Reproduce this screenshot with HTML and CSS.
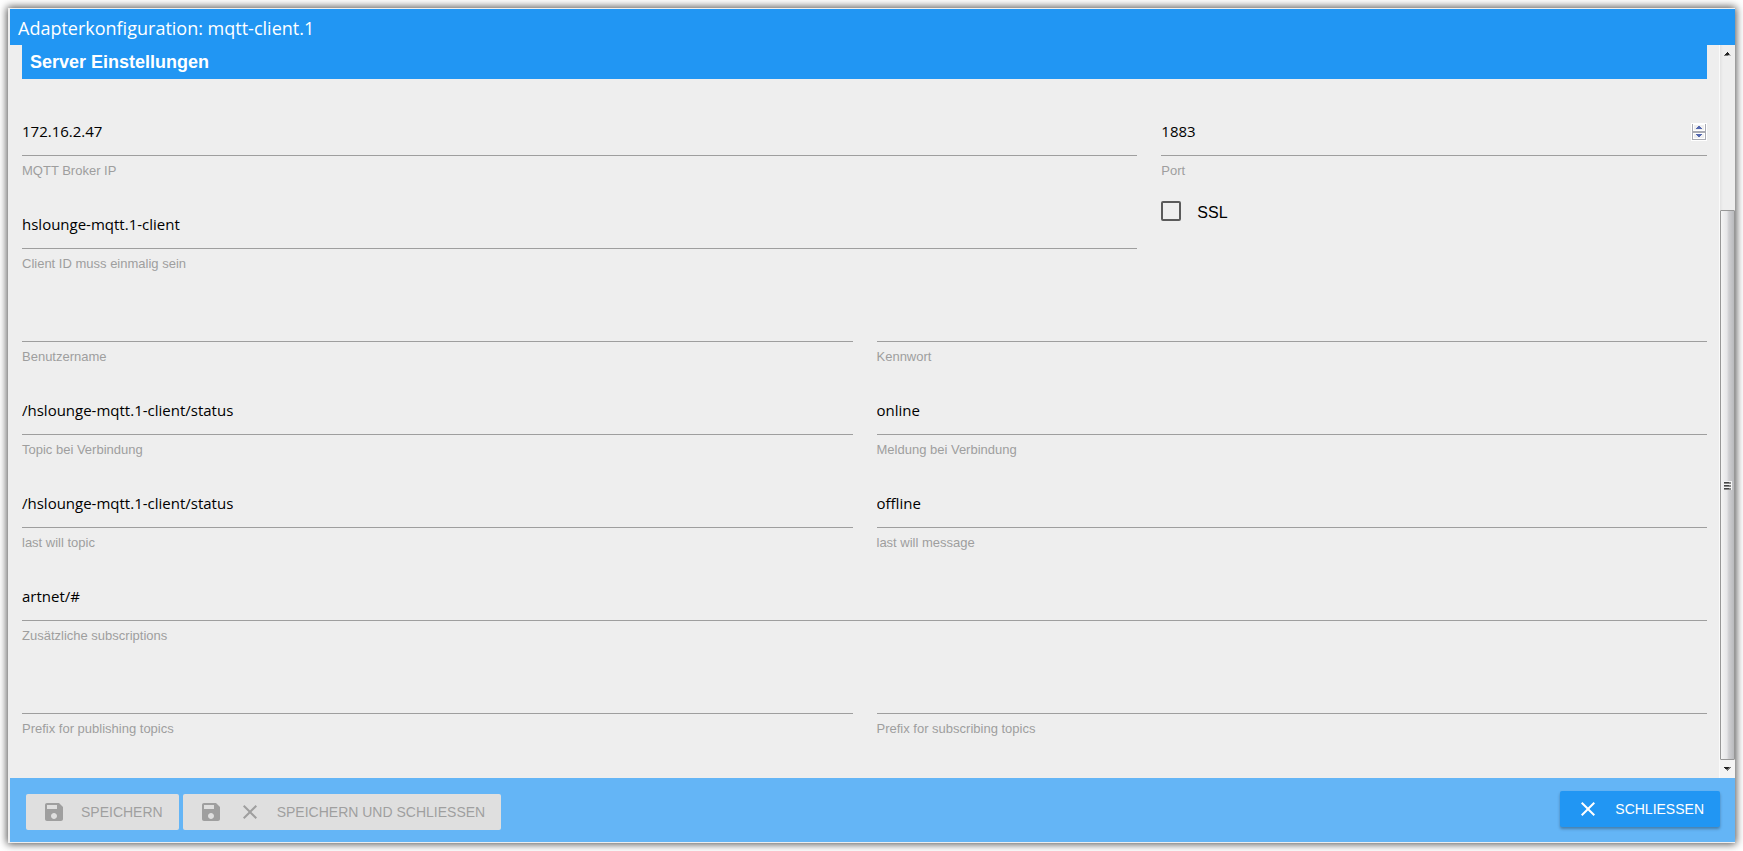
FILE: index.html
```html
<!DOCTYPE html>
<html lang="de">
<head>
<meta charset="utf-8">
<title>Adapterkonfiguration: mqtt-client.1</title>
<link rel="stylesheet" href="styles.css">
</head>
<body>
<svg class="sprite" aria-hidden="true">
  <symbol id="icon-save" viewBox="0 0 24 24"><path d="M17 3H5c-1.11 0-2 .9-2 2v14c0 1.1.89 2 2 2h14c1.1 0 2-.9 2-2V7l-4-4zm-5 16c-1.66 0-3-1.34-3-3s1.34-3 3-3 3 1.34 3 3-1.34 3-3 3zm3-10H5V5h10v4z"/></symbol>
  <symbol id="icon-close" viewBox="0 0 24 24"><path d="M19 6.41L17.59 5 12 10.59 6.41 5 5 6.41 10.59 12 5 17.59 6.41 19 12 13.41 17.59 19 19 17.59 13.41 12z"/></symbol>
</svg>
<div class="dialog" role="dialog" aria-labelledby="title">
  <header class="dialog-header"><h1 class="dialog-title" id="title">Adapterkonfiguration: mqtt-client.1</h1></header>
  <div class="dialog-body">
    <main class="content">
      <h2 class="section-title">Server Einstellungen</h2>
      <form class="fields">
        <div class="field span-8"><input class="field-input" id="url" type="text" value="172.16.2.47"><label class="field-label" for="url">MQTT Broker IP</label></div>
        <div class="field span-4">
          <div class="number-box">
            <input class="field-input" id="port" type="number" value="1883">
            <svg class="spinner" width="16" height="18" viewBox="0 0 16 18" shape-rendering="crispEdges" aria-hidden="true"><path fill="#fff" d="M0 0h16v18H0z"/><path fill="#a9abb3" d="M1 1h1v16H1zM14 1h1v16h-1zM1 8h14v2H1zM1 16h14v1H1z"/><path fill="#efefef" d="M3 2h10v5H3zM3 11h10v4H3z"/><path fill="#5468b0" d="M7 3h2v1H7zM6 4h4v1H6zM5 5h6v1H5zM5 11h6v1H5zM6 12h4v1H6zM7 13h2v1H7z"/></svg>
          </div>
          <label class="field-label" for="port">Port</label>
        </div>
        <div class="field span-8"><input class="field-input" id="client" type="text" value="hslounge-mqtt.1-client"><label class="field-label" for="client">Client ID muss einmalig sein</label></div>
        <div class="check-field span-4"><input class="checkbox" id="ssl" type="checkbox"><label for="ssl">SSL</label></div>
        <div class="field span-6"><input class="field-input" id="user" type="text"><label class="field-label" for="user">Benutzername</label></div>
        <div class="field span-6"><input class="field-input" id="pass" type="password"><label class="field-label" for="pass">Kennwort</label></div>
        <div class="field span-6"><input class="field-input" id="on-topic" type="text" value="/hslounge-mqtt.1-client/status"><label class="field-label" for="on-topic">Topic bei Verbindung</label></div>
        <div class="field span-6"><input class="field-input" id="on-message" type="text" value="online"><label class="field-label" for="on-message">Meldung bei Verbindung</label></div>
        <div class="field span-6"><input class="field-input" id="will-topic" type="text" value="/hslounge-mqtt.1-client/status"><label class="field-label" for="will-topic">last will topic</label></div>
        <div class="field span-6"><input class="field-input" id="will-message" type="text" value="offline"><label class="field-label" for="will-message">last will message</label></div>
        <div class="field span-12"><input class="field-input" id="subscriptions" type="text" value="artnet/#"><label class="field-label" for="subscriptions">Zusätzliche subscriptions</label></div>
        <div class="field span-6"><input class="field-input" id="out-prefix" type="text"><label class="field-label" for="out-prefix">Prefix for publishing topics</label></div>
        <div class="field span-6"><input class="field-input" id="in-prefix" type="text"><label class="field-label" for="in-prefix">Prefix for subscribing topics</label></div>
      </form>
    </main>
    <div class="scrollbar" aria-hidden="true">
      <div class="scroll-end"><svg width="7" height="4" viewBox="0 0 7 4" shape-rendering="crispEdges"><path fill="#222" d="M3 0h1v1H3zM2 1h3v1H2zM1 2h4v1H1z"/><path fill="#777" d="M5 2h1v1H5zM0 3h4v1H0z"/><path fill="#bbb" d="M4 3h3v1H4z"/></svg></div>
      <div></div>
      <div class="thumb"><svg width="8" height="9" viewBox="0 0 8 9" shape-rendering="crispEdges"><path fill="#f4f4f4" d="M0 0h8v9H0z"/><path fill="#444" d="M0 1h5v1H0zM0 4h5v1H0zM0 7h5v1H0z"/><path fill="#888" d="M5 1h2v1H5zM5 4h2v1H5zM5 7h2v1H5zM0 2h7v1H0zM0 5h7v1H0zM0 8h7v1H0z"/></svg></div>
      <div class="scroll-end scroll-down"><svg width="7" height="4" viewBox="0 0 7 4" shape-rendering="crispEdges"><path fill="#222" d="M0 0h5v1H0zM1 1h3v1H1z"/><path fill="#777" d="M5 0h2v1H5zM4 1h2v1H4zM2 2h3v1H2zM3 3h1v1H3z"/></svg></div>
    </div>
  </div>
  <footer class="dialog-footer">
    <button class="btn" type="button" disabled><svg class="icon"><use href="#icon-save"/></svg>SPEICHERN</button>
    <button class="btn" type="button" disabled><svg class="icon"><use href="#icon-save"/></svg><svg class="icon"><use href="#icon-close"/></svg>SPEICHERN UND SCHLIESSEN</button>
    <button class="btn btn-close" type="button"><svg class="icon"><use href="#icon-close"/></svg>SCHLIESSEN</button>
  </footer>
</div>
</body>
</html>
```
FILE: styles.css
```css
* { box-sizing: border-box; }

body {
  margin: 0;
  padding: 8px;
  min-height: 100vh;
  display: flex;
  background: #fff;
  font: 16px/24px "Liberation Sans", Arial, sans-serif;
  color: #000;
}

.sprite { position: absolute; width: 0; height: 0; }

.dialog {
  flex: 1;
  display: flex;
  flex-direction: column;
  border: solid #eee;
  border-width: 1px 0 1px 2px;
  background: #eee;
  box-shadow: 0 0 8px 1px rgba(0, 0, 0, .7);
}

.dialog-header { background: #2196f3; color: #fff; padding: 7px 8px 5px; }

.dialog-title {
  margin: 0;
  font: 18px/24px "Open Sans", "Segoe UI", sans-serif;
}

.dialog-body { flex: 1; display: flex; }

.content { flex: 1; padding: 0 12px; }

.section-title {
  margin: 0;
  padding: 5px 8px;
  background: #2196f3;
  color: #fff;
  font-size: 18px;
  font-weight: bold;
  line-height: 24px;
}

.fields {
  display: grid;
  grid-template-columns: repeat(12, minmax(0, 1fr));
  gap: 22px 24px;
  padding: 29px 0 24px;
}

.span-4 { grid-column: span 4; }
.span-6 { grid-column: span 6; }
.span-8 { grid-column: span 8; }
.span-12 { grid-column: span 12; }

.field { display: flex; flex-direction: column; gap: 7px; }

.field-input {
  width: 100%;
  height: 48px;
  padding: 0 0 2px;
  border: 0;
  border-bottom: 1px solid #9e9e9e;
  border-radius: 0;
  outline: 0;
  background: transparent;
  color: #000;
  font: 15px "Open Sans", "Segoe UI", sans-serif;
}

.field-label { color: #9e9e9e; font-size: 13px; line-height: 16px; }

.number-box { display: flex; align-items: center; height: 48px; border-bottom: 1px solid #9e9e9e; }
.number-box .field-input { flex: 1; height: 47px; border: 0; appearance: textfield; }
.number-box .field-input::-webkit-inner-spin-button { appearance: none; margin: 0; }

.check-field { display: flex; align-items: flex-start; align-self: start; gap: 16px; }

.checkbox {
  appearance: none;
  width: 20px;
  height: 20px;
  margin: 0;
  border: 2px solid #5a5a5a;
  border-radius: 2px;
}

.scrollbar {
  width: 16px;
  display: grid;
  grid-template-rows: 17px 148fr 550fr 18px;
  border-left: 1px solid #fafafa;
  background: linear-gradient(90deg, #e2e2e2, #eee 3px);
}

.scroll-end { display: flex; align-items: center; justify-content: center; }
.scroll-down { background: #f4f4f4; }

.thumb {
  display: flex;
  align-items: center;
  justify-content: center;
  border: 1px solid #979797;
  border-radius: 1px;
  background: linear-gradient(90deg, #f5f5f5, #e6e6e8 45%, #cfcfd2 60%, #b9babd);
}

.dialog-footer {
  display: flex;
  align-items: center;
  gap: 4px;
  height: 64px;
  padding: 0 15px 0 16px;
  background: #64b5f6;
}

.btn {
  display: flex;
  align-items: center;
  gap: 15px;
  height: 36px;
  margin-top: 4px;
  padding: 0 16px;
  border: 0;
  border-radius: 2px;
  background: #dfdfdf;
  color: #9f9f9f;
  font: 14px "Liberation Sans", Arial, sans-serif;
}

.btn-close {
  margin: 0 0 2px auto;
  background: #2196f3;
  color: #fff;
  box-shadow: 0 2px 3px rgba(0, 0, 0, .3);
}

.icon { width: 24px; height: 24px; fill: currentColor; }
```
